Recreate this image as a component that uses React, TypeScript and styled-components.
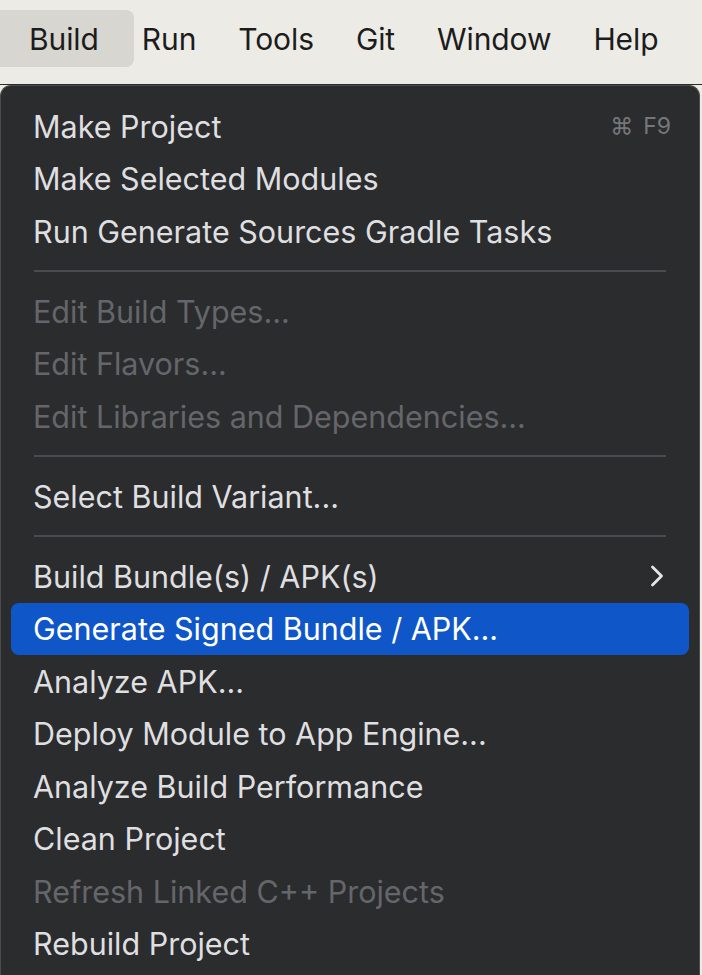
import React from "react";
import styled, { createGlobalStyle } from "styled-components";

const GlobalStyle = createGlobalStyle`
  html, body {
    margin: 0;
    padding: 0;
    background: #ecebe6;
    overflow: hidden;
  }
  body {
    font-family: Inter, "Noto Sans", sans-serif;
    -webkit-font-smoothing: antialiased;
  }
`;

const Screen = styled.div`
  width: 702px;
  height: 975px;
  display: flex;
  flex-direction: column;
  overflow: hidden;
`;

const MenuBar = styled.div`
  height: 85px;
  flex: none;
  display: flex;
  align-items: flex-start;
  padding-top: 10px;
  box-sizing: border-box;
  border-bottom: 1px solid #2a2a2a;
`;

const BarItem = styled.div<{ $active?: boolean }>`
  height: 57px;
  display: flex;
  align-items: center;
  padding: ${(p) => (p.$active ? "0 35px 0 29px" : "0")};
  margin-right: ${(p) => (p.$active ? "8px" : "42px")};
  border-radius: 0 8px 8px 0;
  background: ${(p) => (p.$active ? "#d7d6d1" : "transparent")};
  color: #1c1c1c;
  font-size: 30px;
  letter-spacing: -0.1px;
`;

const Panel = styled.div`
  flex: 1;
  width: 700px;
  background: #2b2c2e;
  border: 1px solid #4b4c4e;
  border-bottom: none;
  border-radius: 11px 11px 0 0;
  box-sizing: border-box;
  padding: 14px 10px 0 10px;
  display: flex;
  flex-direction: column;
`;

const Row = styled.div<{ $disabled?: boolean; $selected?: boolean }>`
  height: 52.5px;
  flex: none;
  display: flex;
  align-items: center;
  justify-content: space-between;
  padding: 0 24px 0 22px;
  border-radius: 8px;
  font-size: 30.5px;
  color: ${(p) => (p.$selected ? "#ffffff" : p.$disabled ? "#65666a" : "#dfdfe0")};
  background: ${(p) => (p.$selected ? "#0f56c9" : "transparent")};
`;

const Shortcut = styled.span`
  color: #76777a;
  font-size: 23px;
  display: flex;
  gap: 10px;
  align-items: center;
  margin-right: -6px;
`;

const Separator = styled.div`
  height: 27.5px;
  flex: none;
  display: flex;
  align-items: center;
  padding: 0 23px;
  &::after {
    content: "";
    flex: 1;
    height: 2px;
    background: #4a4b4e;
  }
`;

type Entry =
  | { sep: true }
  | { label: string; disabled?: boolean; selected?: boolean; shortcut?: boolean; sub?: boolean };

const entries: Entry[] = [
  { label: "Make Project", shortcut: true },
  { label: "Make Selected Modules" },
  { label: "Run Generate Sources Gradle Tasks" },
  { sep: true },
  { label: "Edit Build Types...", disabled: true },
  { label: "Edit Flavors...", disabled: true },
  { label: "Edit Libraries and Dependencies...", disabled: true },
  { sep: true },
  { label: "Select Build Variant..." },
  { sep: true },
  { label: "Build Bundle(s) / APK(s)", sub: true },
  { label: "Generate Signed Bundle / APK...", selected: true },
  { label: "Analyze APK..." },
  { label: "Deploy Module to App Engine..." },
  { label: "Analyze Build Performance" },
  { label: "Clean Project" },
  { label: "Refresh Linked C++ Projects", disabled: true },
  { label: "Rebuild Project" },
];

// submenu arrow
const Chevron = () => (
  <svg width="16" height="22" viewBox="0 0 16 22">
    <path d="M3.5 2 L12.5 11 L3.5 20" fill="none" stroke="#e6e6e6" strokeWidth="2.8" strokeLinecap="round" strokeLinejoin="round" />
  </svg>
);

export default function App() {
  return (
    <Screen>
      <GlobalStyle />
      <MenuBar>
        <BarItem $active>Build</BarItem>
        <BarItem>Run</BarItem>
        <BarItem>Tools</BarItem>
        <BarItem>Git</BarItem>
        <BarItem>Window</BarItem>
        <BarItem>Help</BarItem>
      </MenuBar>
      <Panel>
        {entries.map((e, i) =>
          "sep" in e ? (
            <Separator key={i} />
          ) : (
            <Row key={i} $disabled={e.disabled} $selected={e.selected}>
              <span>{e.label}</span>
              {e.shortcut && (
                <Shortcut>
                  <span>⌘</span>
                  <span>F9</span>
                </Shortcut>
              )}
              {e.sub && <Chevron />}
            </Row>
          )
        )}
      </Panel>
    </Screen>
  );
}
